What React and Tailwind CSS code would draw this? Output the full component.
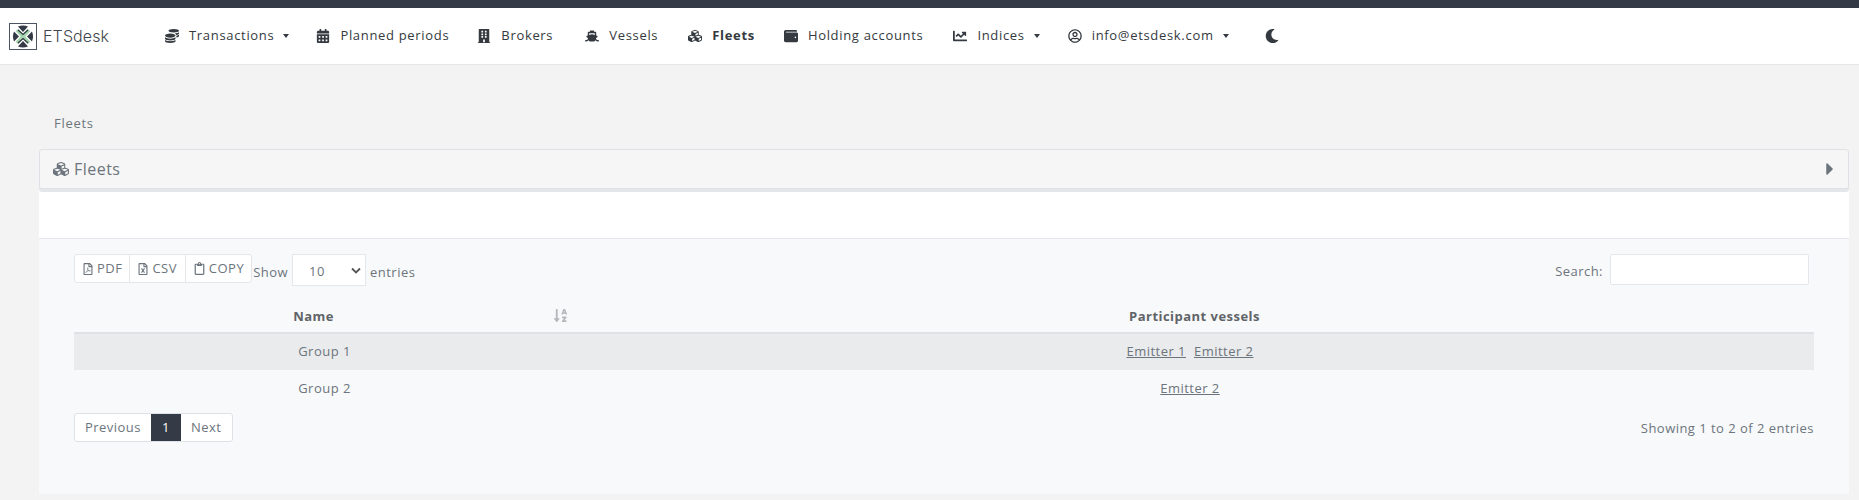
import React from "react";
import { FaCoins, FaCalendarAlt, FaBuilding, FaShip, FaCubes, FaWallet, FaChartLine, FaRegUserCircle, FaMoon, FaRegFilePdf, FaRegFileExcel, FaRegClipboard, FaSortAlphaDown, FaCaretRight } from "react-icons/fa";

function Logo() {
  return (
    <svg width="28" height="27" viewBox="0 0 28 27" className="shrink-0">
      <rect x="0.5" y="0.5" width="27" height="26" fill="#fff" stroke="#4b5563" />
      <path d="M8 7L20 20M20 7L8 20" stroke="#a6d5ae" strokeWidth="3.4" fill="none" />
      <path d="M9 3.5Q14 1.5 19 3.5L14 9Z" fill="#343a46" />
      <path d="M9 7L14 11.5L19 7" stroke="#343a46" strokeWidth="1.3" fill="none" />
      <path d="M9 23.5Q14 25.5 19 23.5L14 18Z" fill="#343a46" />
      <path d="M9 20L14 15.5L19 20" stroke="#343a46" strokeWidth="1.3" fill="none" />
      <path d="M5 8.5Q3 13.5 5 18.5L10 13.5Z" fill="#343a46" />
      <path d="M23 8.5Q25 13.5 23 18.5L18 13.5Z" fill="#343a46" />
    </svg>
  );
}

function Caret() {
  return <span className="ml-[9px] inline-block w-0 h-0 border-x-[3.5px] border-x-transparent border-t-[4px] border-t-[#343a40]" />;
}

function NavItem({ icon: Icon, label, caret, bold, className = "" }) {
  return (
    <a className={`flex items-center h-[20px] ${bold ? "font-bold" : "font-medium"} ${className}`}>
      <Icon className="h-[14px] w-auto mr-[10px] text-[#343a40]" />
      <span>{label}</span>
      {caret && <Caret />}
    </a>
  );
}

export default function App() {
  return (
    <div className="h-[500px] overflow-hidden bg-[#f3f3f3] font-['Open_Sans',sans-serif] text-[13px] tracking-[0.47px] text-[#6c757d]">
      <div className="h-[8px] bg-[#343a46]" />
      <nav className="h-[57px] bg-white border-b border-[#e5e7eb] flex items-center pl-[9px] text-[13px] tracking-[0.68px] text-[#343a40]">
        <div className="flex items-center w-[156px]">
          <Logo />
          <span className="ml-[6px] font-['Inter',sans-serif] text-[16px] font-light tracking-[0.1px] text-[#3f464d]">ETSdesk</span>
        </div>
        <div className="flex items-center gap-[30px]">
          <NavItem icon={FaCoins} label="Transactions" caret />
          <NavItem icon={FaCalendarAlt} label="Planned periods" className="-ml-[3px]" />
          <NavItem icon={FaBuilding} label="Brokers" className="-ml-[2px]" />
          <NavItem icon={FaShip} label="Vessels" className="ml-[2px]" />
          <NavItem icon={FaCubes} label="Fleets" bold />
          <NavItem icon={FaWallet} label="Holding accounts" className="-ml-[1px]" />
          <NavItem icon={FaChartLine} label="Indices" caret />
          <NavItem icon={FaRegUserCircle} label="info@etsdesk.com" caret className="-ml-[2px]" />
          <FaMoon className="h-[14px] w-auto ml-[6px] text-[#343a40]" />
        </div>
      </nav>

      <div className="pl-[39px] pr-[10px]">
        <div className="h-[84px] pl-[15px] pt-[48px] font-medium tracking-[0.7px] leading-[20px]">Fleets</div>

        <div className="h-[40px] rounded-[3px] border border-[#dee2e6] bg-[#f6f6f6] shadow-[0_3px_0_#e4e6e9] flex items-center pl-[13px] pr-[14px] relative z-10">
          <FaCubes size={16} className="text-[#6c757d]" />
          <span className="ml-[5px] text-[16px] leading-none">Fleets</span>
          <FaCaretRight className="h-[20px] w-[8px] ml-auto" />
        </div>

        <div className="h-[50px] bg-white border-b border-[#e5e7eb]" />

        <div className="h-[255px] bg-[#f8f9fa] px-[35px]">
          <div className="flex pt-[15px] justify-between h-[60px]">
            <div className="flex items-start">
              <div className="flex h-[29px] rounded-[3px] border border-[#e5e7eb] bg-white">
                <span className="flex items-center gap-[3px] px-[7px] border-r border-[#e5e7eb]"><FaRegFilePdf size={12} />PDF</span>
                <span className="flex items-center gap-[3px] pl-[7px] pr-[8px] border-r border-[#e5e7eb]"><FaRegFileExcel size={12} />CSV</span>
                <span className="flex items-center gap-[3px] px-[7px]"><FaRegClipboard size={13} />COPY</span>
              </div>
              <span className="ml-px mt-[8px] leading-[20px]">Show</span>
              <div className="ml-[4px] w-[74px] h-[32px] bg-white border border-[#e5e7eb] flex items-center justify-between pl-[16px] pr-[4px] pt-[3px] text-[#6c757d]">
                <span>10</span>
                <svg width="10" height="7" viewBox="0 0 10 7" className="-mt-[3px]"><path d="M1 1.5L5 5.5L9 1.5" fill="none" stroke="#555" strokeWidth="1.8" /></svg>
              </div>
              <span className="ml-[4px] mt-[8px] leading-[20px]">entries</span>
            </div>
            <div className="flex items-start pr-[5px]">
              <span className="mt-[7px] leading-[20px]">Search:</span>
              <div className="ml-[7px] w-[199px] h-[31px] bg-white border border-[#e5e7eb] rounded-[2px]" />
            </div>
          </div>

          <table className="w-full border-collapse text-center">
            <thead>
              <tr className="h-[34px] border-b-2 border-[#dee2e6] text-[#5f6468]">
                <th className="w-[499px] font-bold relative pr-[20px] pt-[2px]">
                  Name
                  <FaSortAlphaDown size={15} className="absolute right-[5px] top-[9px] text-[#b5b8bb]" />
                </th>
                <th className="font-bold pt-[2px] pl-[2px]">Participant vessels</th>
              </tr>
            </thead>
            <tbody>
              <tr className="h-[37px] bg-[#eaebec]">
                <td className="pl-[2px]">Group 1</td>
                <td className="pr-[7px]"><a className="underline">Emitter 1</a><span className="inline-block w-[8px]" /><a className="underline">Emitter 2</a></td>
              </tr>
              <tr className="h-[37px]">
                <td className="pl-[2px]">Group 2</td>
                <td className="pr-[7px]"><a className="underline">Emitter 2</a></td>
              </tr>
            </tbody>
          </table>

          <div className="flex items-start justify-between mt-[6px]">
            <div className="flex h-[29px] rounded-[3px] border border-[#dee2e6] bg-white overflow-hidden">
              <span className="flex items-center px-[10px]">Previous</span>
              <span className="flex items-center px-[11px] bg-[#343a46] text-white -my-px">1</span>
              <span className="flex items-center pl-[10px] pr-[11px]">Next</span>
            </div>
            <span className="mt-[5px] leading-[20px]">Showing 1 to 2 of 2 entries</span>
          </div>
        </div>
      </div>
    </div>
  );
}
